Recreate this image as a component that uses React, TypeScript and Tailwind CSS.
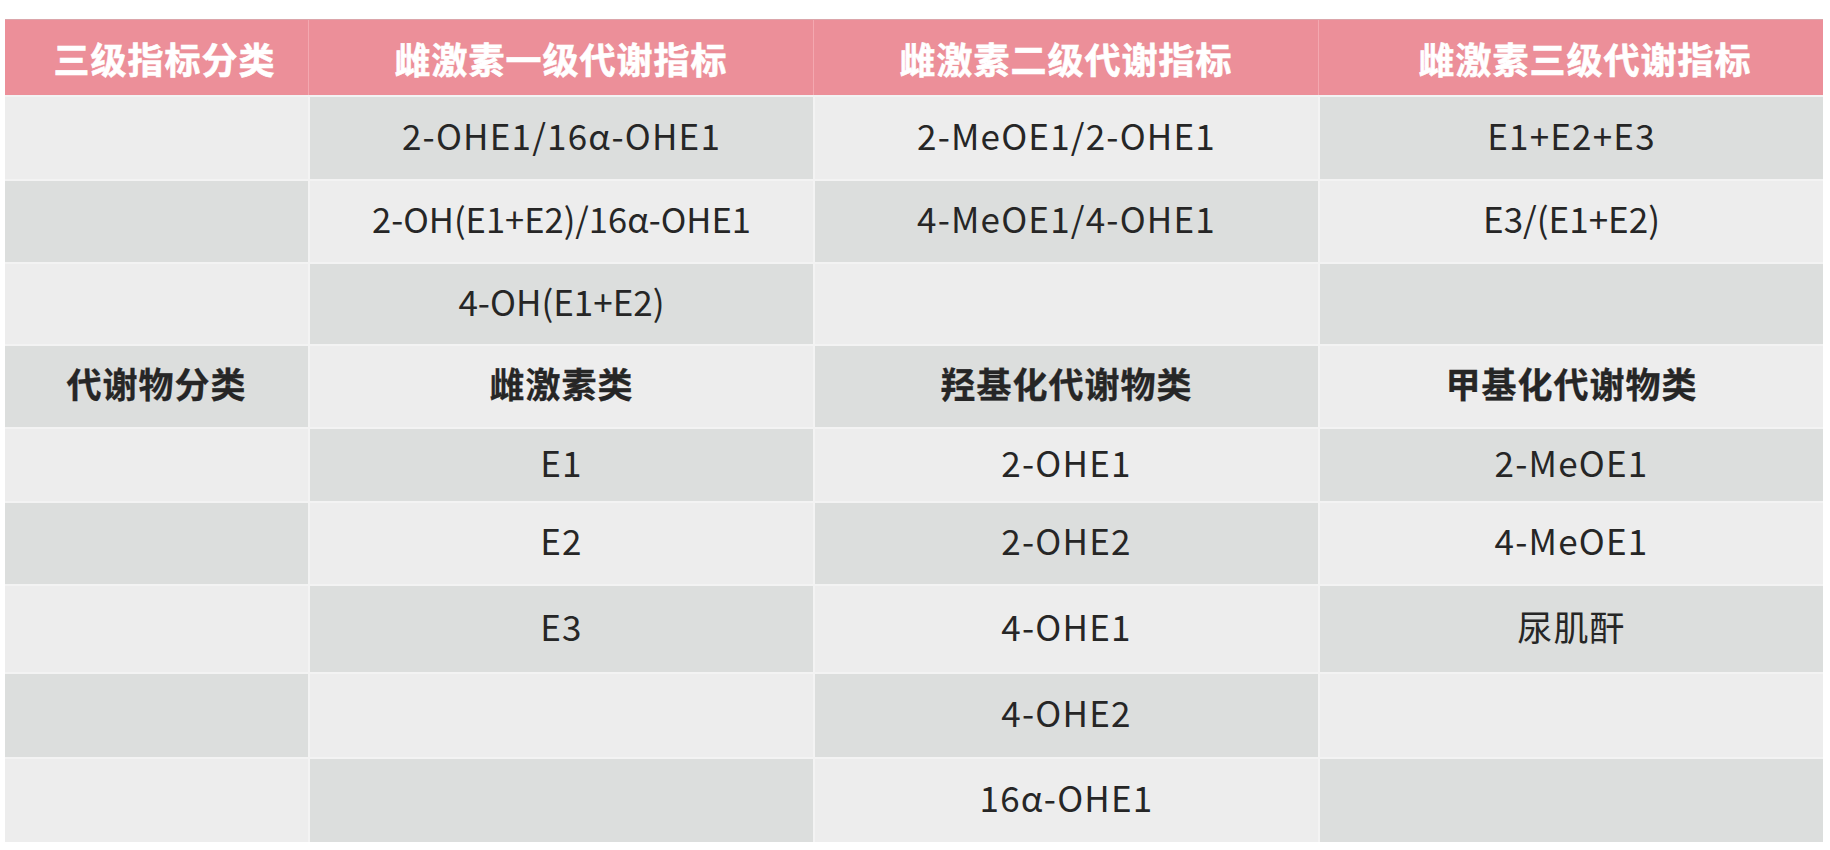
const headers = ["三级指标分类", "雌激素一级代谢指标", "雌激素二级代谢指标", "雌激素三级代谢指标"];
const headerPad = ["pl-[16px]", "", "", "pl-[28px]"];

// each row: [col1, col2, col3, col4], bold rows are section titles
const rows: { cells: string[]; bold?: boolean; h: string }[] = [
  { cells: ["", "2-OHE1/16α-OHE1", "2-MeOE1/2-OHE1", "E1+E2+E3"], h: "h-[84px]" },
  { cells: ["", "2-OH(E1+E2)/16α-OHE1", "4-MeOE1/4-OHE1", "E3/(E1+E2)"], h: "h-[83px]" },
  { cells: ["", "4-OH(E1+E2)", "", ""], h: "h-[82px]" },
  { cells: ["代谢物分类", "雌激素类", "羟基化代谢物类", "甲基化代谢物类"], bold: true, h: "h-[83px]" },
  { cells: ["", "E1", "2-OHE1", "2-MeOE1"], h: "h-[74px]" },
  { cells: ["", "E2", "2-OHE2", "4-MeOE1"], h: "h-[83px]" },
  { cells: ["", "E3", "4-OHE1", "尿肌酐"], h: "h-[88px]" },
  { cells: ["", "", "4-OHE2", ""], h: "h-[85px]" },
  { cells: ["", "", "16α-OHE1", ""], h: "h-[85px]" },
];

const widths = ["w-[303px]", "w-[505px]", "w-[505px]", "w-[505px]"];

function textClass(c: string, bold?: boolean) {
  if (bold) return "font-bold text-[35px] tracking-[1px] [-webkit-text-stroke:0.3px_#262626]";
  if (c.length > 16) return "text-[34.5px]";
  if (c.includes("(")) return "text-[35px]";
  return "text-[35px] tracking-[1.2px]";
}

export default function App() {
  return (
    <div
      className="w-[1830px] h-[850px] bg-white pt-[19px] pl-[5px]"
      style={{ fontFamily: '"Noto Sans CJK SC", "Noto Sans", sans-serif' }}
    >
      <div className="flex flex-col w-[1818px]">
        {/* header */}
        <div className="flex h-[76px] bg-[#ec8f99] border-t border-[#dba6ab]">
          {headers.map((h, i) => (
            <div
              key={h}
              className={`${widths[i]} ${headerPad[i]} flex items-center justify-center text-white font-bold text-[36px] tracking-[1px] [-webkit-text-stroke:0.6px_white] ${
                i > 0 ? "border-l border-[#f4a8b0]" : ""
              }`}
            >
              {h}
            </div>
          ))}
        </div>

        {rows.map((row, r) => (
          <div key={r} className={`flex ${row.h} border-t-2 border-[#f3f3f3]`}>
            {row.cells.map((c, i) => {
              const dark = (r + i) % 2 === 1;
              return (
                <div
                  key={i}
                  className={`${widths[i]} flex items-center justify-center pb-[6px] text-[#262626] ${
                    dark ? "bg-[#dcdedd]" : "bg-[#ededed]"
                  } ${i > 0 ? "border-l-2 border-[#f3f3f3]" : ""} ${textClass(c, row.bold)}`}
                >
                  {c}
                </div>
              );
            })}
          </div>
        ))}
      </div>
    </div>
  );
}
